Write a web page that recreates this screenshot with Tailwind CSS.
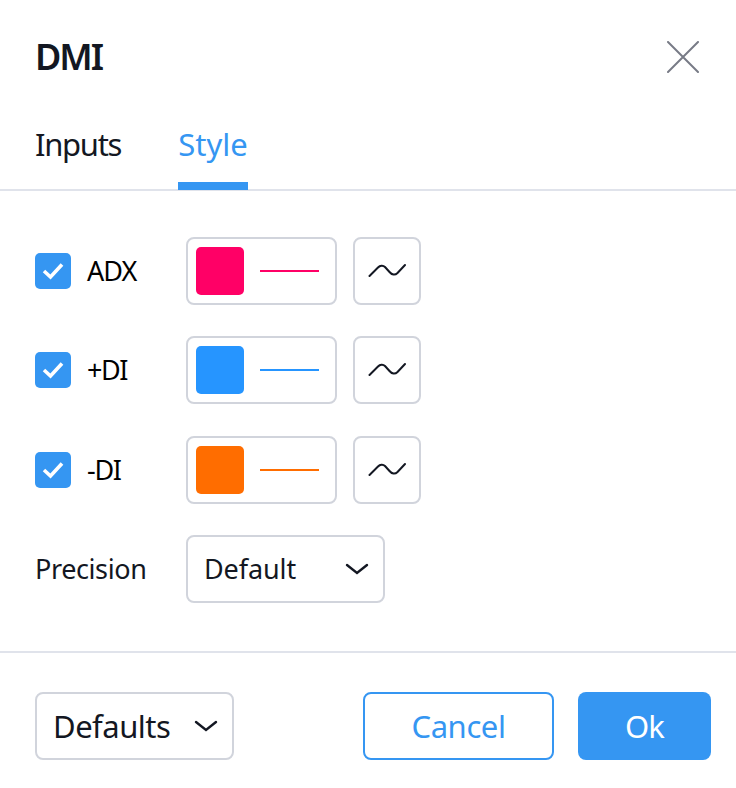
<!DOCTYPE html>
<html lang="en">
<head>
    <meta charset="UTF-8">
    <title>DMI</title>
    <script src="https://cdn.jsdelivr.net/npm/@tailwindcss/browser@4"></script>
</head>
<body class="bg-white w-[736px] h-[788px] overflow-hidden font-['Noto_Sans',sans-serif] text-[#131722]">

    <!-- title -->
    <div class="h-[114px] pl-[35px] pr-[37px] flex items-center justify-between">
        <h1 class="text-[36px] leading-none font-semibold tracking-[-2px]">DMI</h1>
        <svg class="w-8 h-8 text-[#787b86]" viewBox="0 0 32 32" fill="none" stroke="currentColor" stroke-width="2" stroke-linecap="round">
            <path d="M1 1 L31 31 M31 1 L1 31" />
        </svg>
    </div>

    <!-- tabs -->
    <div class="h-[77px] px-[35px] flex border-b-2 border-[#e0e3eb]">
        <div class="w-[143px] h-[68px] text-[31px] leading-[60px] tracking-[-1.3px]">Inputs</div>
        <div class="w-[70px] h-[76px] text-[31px] leading-[60px] text-center text-[#3596f2] border-b-8 border-[#3596f2]">Style</div>
    </div>

    <!-- style rows -->
    <div class="h-[462px] pt-[46px] px-[35px] border-b-2 border-[#e0e3eb]">

        <div class="flex items-center h-[68px]">
            <div class="w-[36px] h-[36px] rounded-[5px] bg-[#3596f2] flex items-center justify-center">
                <svg class="w-[22px] h-[22px]" viewBox="0 0 22 22" fill="none" stroke="white" stroke-width="3.6"><path d="M2 11 L8.5 17 L20 4.5" /></svg>
            </div>
            <span class="w-[115px] pl-[16px] text-[27px] text-black tracking-[-1px]">ADX</span>
            <div class="w-[151px] h-[68px] rounded-[8px] border-2 border-[#d1d4dc] flex items-center pl-[8px]">
                <div class="w-[48px] h-[48px] rounded-[5px] bg-[#ff0066]"></div>
                <div class="w-[59px] h-[2px] ml-[16px] bg-[#ff0066]"></div>
            </div>
            <div class="w-[68px] h-[68px] ml-[16px] rounded-[8px] border-2 border-[#d1d4dc] flex items-center justify-center">
                <svg class="w-[38px] h-[18px]" viewBox="0 0 38 18" fill="none" stroke="#131722" stroke-width="2" stroke-linecap="round"><path d="M1.5 14 L10 5.5 C12 3.5 15 3 17 5 L21.5 10 C24 13 27 13.5 29.5 11 L37 3" /></svg>
            </div>
        </div>

        <div class="flex items-center h-[68px] mt-[31px]">
            <div class="w-[36px] h-[36px] rounded-[5px] bg-[#3596f2] flex items-center justify-center">
                <svg class="w-[22px] h-[22px]" viewBox="0 0 22 22" fill="none" stroke="white" stroke-width="3.6"><path d="M2 11 L8.5 17 L20 4.5" /></svg>
            </div>
            <span class="w-[115px] pl-[16px] text-[27px] text-black tracking-[-1.5px]">+DI</span>
            <div class="w-[151px] h-[68px] rounded-[8px] border-2 border-[#d1d4dc] flex items-center pl-[8px]">
                <div class="w-[48px] h-[48px] rounded-[5px] bg-[#2695ff]"></div>
                <div class="w-[59px] h-[2px] ml-[16px] bg-[#2695ff]"></div>
            </div>
            <div class="w-[68px] h-[68px] ml-[16px] rounded-[8px] border-2 border-[#d1d4dc] flex items-center justify-center">
                <svg class="w-[38px] h-[18px]" viewBox="0 0 38 18" fill="none" stroke="#131722" stroke-width="2" stroke-linecap="round"><path d="M1.5 14 L10 5.5 C12 3.5 15 3 17 5 L21.5 10 C24 13 27 13.5 29.5 11 L37 3" /></svg>
            </div>
        </div>

        <div class="flex items-center h-[68px] mt-[32px]">
            <div class="w-[36px] h-[36px] rounded-[5px] bg-[#3596f2] flex items-center justify-center">
                <svg class="w-[22px] h-[22px]" viewBox="0 0 22 22" fill="none" stroke="white" stroke-width="3.6"><path d="M2 11 L8.5 17 L20 4.5" /></svg>
            </div>
            <span class="w-[115px] pl-[16px] text-[27px] text-black tracking-[-1.3px]">-DI</span>
            <div class="w-[151px] h-[68px] rounded-[8px] border-2 border-[#d1d4dc] flex items-center pl-[8px]">
                <div class="w-[48px] h-[48px] rounded-[5px] bg-[#ff6d00]"></div>
                <div class="w-[59px] h-[2px] ml-[16px] bg-[#ff6d00]"></div>
            </div>
            <div class="w-[68px] h-[68px] ml-[16px] rounded-[8px] border-2 border-[#d1d4dc] flex items-center justify-center">
                <svg class="w-[38px] h-[18px]" viewBox="0 0 38 18" fill="none" stroke="#131722" stroke-width="2" stroke-linecap="round"><path d="M1.5 14 L10 5.5 C12 3.5 15 3 17 5 L21.5 10 C24 13 27 13.5 29.5 11 L37 3" /></svg>
            </div>
        </div>

        <div class="flex items-center h-[68px] mt-[31px]">
            <span class="w-[151px] text-[27px] tracking-[-0.4px]">Precision</span>
            <div class="w-[199px] h-[68px] rounded-[8px] border-2 border-[#d1d4dc] flex items-center justify-between pl-[16px] pr-[14px]">
                <span class="text-[27px] tracking-[-0.1px]">Default</span>
                <svg class="w-[24px] h-[12px]" viewBox="0 0 24 12" fill="none" stroke="#131722" stroke-width="2.4" stroke-linecap="round"><path d="M2 2 L12 10 L22 2" /></svg>
            </div>
        </div>
    </div>

    <!-- footer -->
    <div class="flex items-center pt-[39px] pl-[35px] pr-[25px]">
        <div class="w-[199px] h-[68px] rounded-[8px] border-2 border-[#d1d4dc] flex items-center justify-between pl-[16px] pr-[14px]">
            <span class="text-[31px] tracking-[-0.5px]">Defaults</span>
            <svg class="w-[24px] h-[12px]" viewBox="0 0 24 12" fill="none" stroke="#131722" stroke-width="2.4" stroke-linecap="round"><path d="M2 2 L12 10 L22 2" /></svg>
        </div>
        <div class="ml-auto w-[191px] h-[68px] rounded-[8px] border-2 border-[#3596f2] text-[#3596f2] text-[31px] tracking-[-0.4px] flex items-center justify-center">Cancel</div>
        <div class="ml-[24px] w-[133px] h-[68px] rounded-[8px] bg-[#3596f2] text-white text-[31px] tracking-[-1px] flex items-center justify-center">Ok</div>
    </div>

</body>
</html>
